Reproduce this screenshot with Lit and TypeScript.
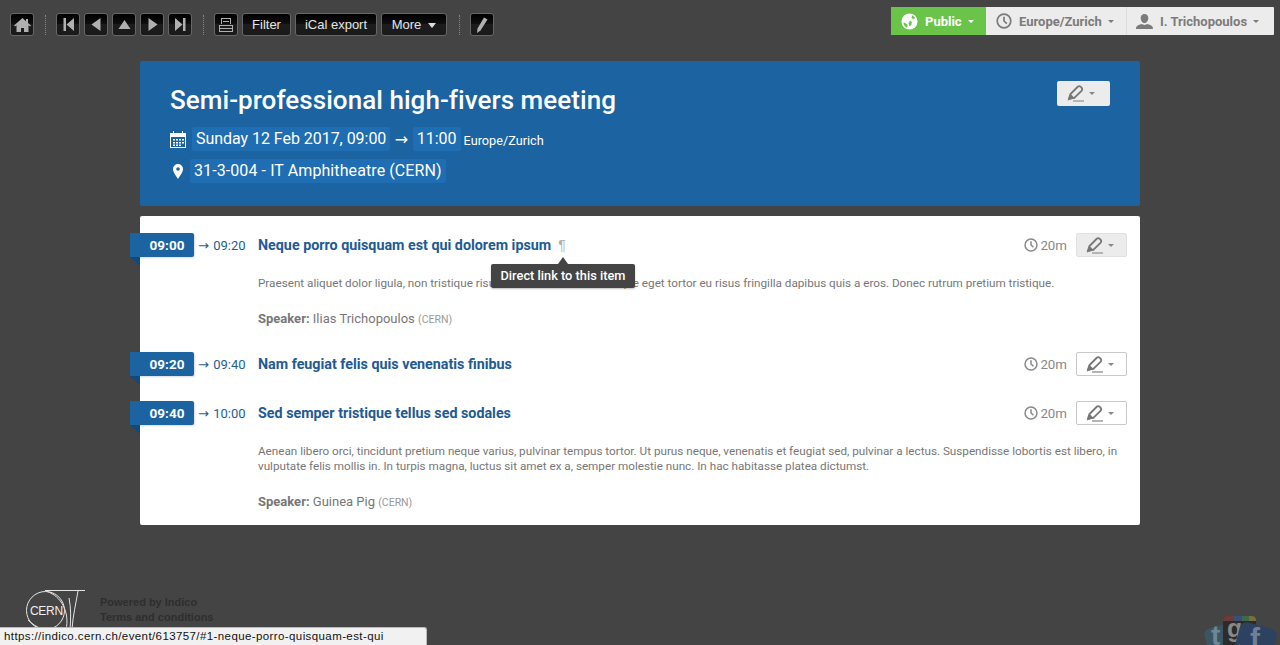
import { LitElement, html, css, svg } from "lit";
import { customElement } from "lit/decorators.js";

const pencil = (c: string) => html`<svg class="pen" width="17" height="17" viewBox="0 0 17 17"><path d="M2 13.500 3.500 9 10.500 2c1-1 2.300-1 3.300-.1l.7.7c.9 1 .9 2.200 0 3.200L7.300 13Z" fill="none" stroke="${c}" stroke-width="1.800"/><path d="M.8 15.500 3.200 8.500l4.600 4.700Z" fill="${c}"/><rect x="6" y="15" width="11" height="2" fill="#b5b5b5"/></svg>`;

const clock = (s: number, c: string) => html`<svg width="${s}" height="${s}" viewBox="0 0 16 16"><circle cx="8" cy="8" r="6.800" fill="none" stroke="${c}" stroke-width="1.700"/><path d="M8 3.800V8l2.800 2.600" fill="none" stroke="${c}" stroke-width="1.700"/></svg>`;

const navIcons = [
  svg`<path d="M3.500 2h2.500v13H3.500zM14 2v13L6.500 8.500z"/>`,
  svg`<path d="M12.500 2v13L3.500 8.500z"/>`,
  svg`<path d="M2.500 13 8.500 4l6 9z"/>`,
  svg`<path d="M4.500 2v13l9-6.500z"/>`,
  svg`<path d="M3 2v13l7.500-6.500zM11 2h2.500v13H11z"/>`,
];

interface Entry {
  start: string;
  end: string;
  title: string;
  desc?: string[];
  speaker?: string;
  affil?: string;
  active?: boolean;
  link?: boolean;
}

const entries: Entry[] = [
  {
    start: "09:00",
    end: "09:20",
    title: "Neque porro quisquam est qui dolorem ipsum",
    desc: ["Praesent aliquet dolor ligula, non tristique risus tincidunt vitae ut. Quisque eget tortor eu risus fringilla dapibus quis a eros. Donec rutrum pretium tristique."],
    speaker: "Ilias Trichopoulos",
    affil: "(CERN)",
    active: true,
    link: true,
  },
  { start: "09:20", end: "09:40", title: "Nam feugiat felis quis venenatis finibus" },
  {
    start: "09:40",
    end: "10:00",
    title: "Sed semper tristique tellus sed sodales",
    desc: [
      "Aenean libero orci, tincidunt pretium neque varius, pulvinar tempus tortor. Ut purus neque, venenatis et feugiat sed, pulvinar a lectus. Suspendisse lobortis est libero, in",
      "vulputate felis mollis in. In turpis magna, luctus sit amet ex a, semper molestie nunc. In hac habitasse platea dictumst.",
    ],
    speaker: "Guinea Pig",
    affil: "(CERN)",
  },
];

@customElement("app-root")
export class AppRoot extends LitElement {
  static styles = css`
    :host {
      display: block;
      position: relative;
      height: 645px;
      overflow: hidden;
      background: #444;
      font-family: Roboto, "Liberation Sans", sans-serif;
      color: #777;
    }
    svg { display: block; flex: none; }
    .topbar {
      height: 49px;
      box-sizing: border-box;
      padding: 7px 6px 0 10px;
      display: flex;
      justify-content: space-between;
      align-items: flex-start;
    }
    .tools { display: flex; align-items: center; margin-top: 6px; height: 23px; }
    .btn {
      box-sizing: border-box;
      height: 23px;
      width: 24px;
      border: 1px solid #666;
      border-radius: 3px;
      background: linear-gradient(#000 0, #0e0e0e 45%, #1c1c1c 50%, #1a1a1a 100%);
      color: #e4e4e4;
      display: flex;
      align-items: center;
      justify-content: center;
      font: 13px "Liberation Sans", Arial, sans-serif;
      margin-right: 4px;
    }
    .btn svg { fill: #b0b0b0; }
    .sep {
      width: 0;
      height: 20px;
      border-left: 1px dotted #888;
      margin: 0 10px 0 7px;
    }
    .sep.last { margin-left: 8px; }
    .filter { width: 49px; }
    .ical { width: 82px; }
    .more { width: 66px; gap: 7px; }
    .more i {
      border: 4px solid transparent;
      border-top: 5px solid #ddd;
      border-bottom: 0;
      margin-top: 2px;
    }
    .session {
      display: flex;
      height: 28px;
      font-weight: 700;
      font-size: 13px;
      background: #ececec;
      border-radius: 1px;
    }
    .session > div {
      display: flex;
      align-items: center;
      box-sizing: border-box;
      color: #7b7b7b;
      gap: 7px;
    }
    .session .pub { width: 95px; background: #69c449; color: #fff; padding-left: 10px; }
    .session .tz { width: 141px; padding-left: 10px; border-right: 1px solid #dcdcdc; }
    .session .usr { width: 147px; padding-left: 9px; }
    .caret {
      border: 3px solid transparent;
      border-top: 3px solid currentColor;
      border-bottom: 0;
      margin-left: -1px;
    }
    main {
      width: 1000px;
      margin: 12px auto 0;
    }
    .head {
      height: 145px;
      box-sizing: border-box;
      background: #1b63a1;
      border-radius: 2px;
      padding: 21px 30px 0;
      color: #fff;
      position: relative;
    }
    h1 {
      margin: 0;
      font-size: 26px;
      font-weight: 500;
      line-height: 36px;
      letter-spacing: 0.05px;
    }
    .line { display: flex; align-items: center; height: 24px; font-size: 16px; margin-top: 8px; }
    .line.first { margin-top: 9px; }
    .hl { background: #1f6db3; border-radius: 2px; padding: 0 4px; line-height: 24px; }
    .hl.date { letter-spacing: -0.04px; }
    .hl.loc { letter-spacing: 0.09px; }
    .arrow { margin: 0 4.500px; font-family: "DejaVu Sans", sans-serif; }
    .small { font-size: 12.700px; margin-left: 3px; position: relative; top: 1px; }
    .head .hbtn {
      position: absolute;
      right: 30px;
      top: 20px;
      width: 53px;
      height: 25px;
      box-sizing: border-box;
      padding-left: 10px;
      background: #ececec;
      border-radius: 2px;
      display: flex;
      align-items: center;
      gap: 6px;
      color: #888;
    }
    .card {
      margin-top: 10px;
      height: 309px;
      box-sizing: border-box;
      background: #fff;
      border-radius: 2px;
      padding-top: 17px;
    }
    .entry { display: grid; grid-template-columns: 118px minmax(0, 1fr); }
    .entry + .entry { margin-top: 25px; }
    .when { display: flex; align-items: center; height: 24px; margin-left: -10px; font-size: 13px; color: #1d5e97; position: relative; }
    .stamp {
      width: 64px;
      height: 24px;
      line-height: 24px;
      text-align: center;
      padding-left: 10px;
      box-sizing: border-box;
      background: #1b63a1;
      color: #fff;
      font-weight: 700;
      font-size: 13.500px;
      border-radius: 0 2px 2px 0;
      box-shadow: 1px 1px 2px rgba(0,0,0,.15);
    }
    .fold {
      position: absolute;
      left: 0;
      top: 24px;
      width: 0;
      height: 0;
      border-top: 9px solid #124a7c;
      border-left: 10px solid transparent;
    }
    .to { margin-left: 4px; white-space: nowrap; word-spacing: 1px; }
    .to i { font: 13px "DejaVu Sans", sans-serif; }
    .body { padding-right: 13px; }
    .titlerow { display: flex; align-items: center; height: 24px; position: relative; }
    .title { font-size: 14.300px; font-weight: 700; color: #225a94; }
    .para { margin-left: 7px; color: #b0b0b0; font: 14px "Liberation Sans", sans-serif; }
    .right { margin-left: auto; display: flex; align-items: center; gap: 9px; }
    .dur { display: flex; align-items: center; gap: 2px; font-size: 13.300px; color: #888; }
    .ebtn {
      width: 51px;
      height: 24px;
      box-sizing: border-box;
      padding-left: 9px;
      border: 1px solid #c9c9c9;
      border-radius: 2px;
      display: flex;
      align-items: center;
      gap: 6px;
      color: #888;
    }
    .ebtn.on { background: #ececec; border-color: #e0e0e0; }
    .desc { margin-top: 19px; font-size: 11.700px; line-height: 15px; color: #777; white-space: nowrap; }
    .speaker { margin-top: 20px; font-size: 13px; line-height: 15px; color: #777; }
    .speaker b { font-weight: 700; }
    .speaker small { font-size: 10.500px; color: #999; }
    .tip {
      position: absolute;
      left: 233px;
      top: 31px;
      width: 144px;
      height: 24px;
      line-height: 24px;
      background: #444;
      color: #fff;
      font-size: 12.800px;
      font-weight: 500;
      text-align: center;
      border-radius: 2px;
      box-shadow: 0 1px 2px rgba(0,0,0,.25);
      white-space: nowrap;
    }
    .tip::before {
      content: "";
      position: absolute;
      left: 67px;
      top: -7px;
      border: 5px solid transparent;
      border-top: 0;
      border-bottom: 7px solid #444;
    }
    .foot {
      position: absolute;
      left: 25px;
      top: 590px;
      display: flex;
      gap: 15px;
    }
    .foot div { padding-top: 5px; font: 700 11px/15px "Liberation Sans", Arial, sans-serif; color: #2e2e2e; }
    .status {
      position: absolute;
      left: 0;
      bottom: 0;
      width: 427px;
      height: 18px;
      box-sizing: border-box;
      background: #f1f1f1;
      border: 1px solid #bbb;
      border-left: 0;
      border-bottom: 0;
      border-radius: 0 3px 0 0;
      font: 11.500px/16px "Liberation Sans", Arial, sans-serif;
      letter-spacing: 0.4px;
      color: #111;
      padding-left: 4px;
    }
    .social { position: absolute; right: 0; bottom: 0; }
  `;

  private entry(e: Entry) {
    return html`
      <div class="entry">
        <div class="when">
          <span class="stamp">${e.start}</span><span class="fold"></span>
          <span class="to"><i>→</i> ${e.end}</span>
        </div>
        <div class="body">
          <div class="titlerow">
            <span class="title">${e.title}</span>
            ${e.link ? html`<span class="para">¶</span><span class="tip">Direct link to this item</span>` : ""}
            <div class="right">
              <span class="dur">${clock(14, "#888")}20m</span>
              <span class="ebtn ${e.active ? "on" : ""}">${pencil("#777")}<span class="caret"></span></span>
            </div>
          </div>
          ${e.desc ? html`<div class="desc">${e.desc.map((d) => html`<div>${d}</div>`)}</div>` : ""}
          ${e.speaker ? html`<div class="speaker"><b>Speaker:</b> ${e.speaker} <small>${e.affil}</small></div>` : ""}
        </div>
      </div>
    `;
  }

  render() {
    return html`
      <div class="topbar">
        <div class="tools">
          <span class="btn"><svg width="17" height="16" viewBox="0 0 17 16"><path d="M8.500 1 0 8.500l1 1 1.500-1.200V15h4.500v-4h3v4H14.500V8.300L16 9.500l1-1L14 6V2h-2v2.200z"/></svg></span>
          <span class="sep"></span>
          ${navIcons.map((p) => html`<span class="btn"><svg width="17" height="17" viewBox="0 0 17 17">${p}</svg></span>`)}
          <span class="sep"></span>
          <span class="btn"><svg width="14" height="14" viewBox="0 0 14 14"><path fill-rule="evenodd" d="M2 0h10v6h-1V1H3v5H2zM0 7h14v7H0zM1 8v2h12V8zM1 11v2h12v-2z"/><rect x="4" y="3" width="6" height="1"/></svg></span>
          <span class="btn filter">Filter</span>
          <span class="btn ical">iCal export</span>
          <span class="btn more">More <i></i></span>
          <span class="sep last"></span>
          <span class="btn"><svg width="12" height="16" viewBox="0 0 12 16"><path d="M8 .5 11.500 2.500 4.500 13.500 1 16l.5-4.500z"/></svg></span>
        </div>
        <div class="session">
          <div class="pub">
            <svg width="17" height="17" viewBox="0 0 18 18"><circle cx="9" cy="9" r="8.500" fill="#fff"/><path d="M2.500 10c1 0 2 .5 3 1.500l1.500 1-.5 3C4.500 15 3 13 2.500 10zM9.500 8l2 1.500-.5 3-2 1.500-1-3zM12 2.500l3 2.500-2 1.500-2-1.500z" fill="#69c449"/></svg>
            Public <span class="caret"></span>
          </div>
          <div class="tz">${clock(16, "#7b7b7b")} Europe/Zurich <span class="caret"></span></div>
          <div class="usr">
            <svg width="17" height="15" viewBox="0 0 17 15"><path d="M8.500 0c2.500 0 3.800 1.800 3.800 4S11 9 8.500 9 4.700 6.200 4.700 4 6 0 8.500 0zM0 15c0-3 2-4 5.500-5l3 1 3-1c3.500 1 5.500 2 5.500 5z" fill="#7b7b7b"/></svg>
            I. Trichopoulos <span class="caret"></span>
          </div>
        </div>
      </div>
      <main>
        <section class="head">
          <h1>Semi-professional high-fivers meeting</h1>
          <div class="line first">
            <svg width="16" height="17" viewBox="0 0 16 17" style="margin-right:6px"><path fill="#fff" fill-rule="evenodd" d="M0 2h3V0h1v2h8V0h1v2h3v15H0zM1 6v10h14V6z"/><path fill="#fff" d="M3 8h2v1.500H3zM6 8h2v1.500H6zM9 8h2v1.500H9zM12 8h2v1.500h-2zM3 11h2v1.500H3zM6 11h2v1.500H6zM9 11h2v1.500H9zM12 11h2v1.500h-2zM3 13.500h2V15H3zM6 13.500h2V15H6zM9 13.500h2V15H9z"/></svg>
            <span class="hl date">Sunday 12 Feb 2017, 09:00</span>
            <span class="arrow">→</span>
            <span class="hl">11:00</span>
            <span class="small">Europe/Zurich</span>
          </div>
          <div class="line">
            <svg width="10" height="15" viewBox="0 0 10 15" style="margin:0 7px 0 3px"><path fill="#fff" fill-rule="evenodd" d="M5 0a5 5 0 0 1 5 5c0 3-3 7-5 10C3 12 0 8 0 5a5 5 0 0 1 5-5zm0 3.200a1.800 1.800 0 1 0 0 3.600 1.800 1.800 0 0 0 0-3.600z"/></svg>
            <span class="hl loc">31-3-004 - IT Amphitheatre (CERN)</span>
          </div>
          <span class="hbtn">${pencil("#777")}<span class="caret"></span></span>
        </section>
        <section class="card">${entries.map((e) => this.entry(e))}</section>
      </main>
      <footer class="foot">
        <svg width="60" height="50" viewBox="0 0 60 50" fill="none" stroke="#e4e4e4" stroke-width="1">
          <path d="M60 .5H20"/>
          <circle cx="20.500" cy="20.500" r="19"/>
          <path d="M22 1.500C36 6 45 22 41 40M53 1c-2 12-5 24-6 38M44 8c2 10 2 20 1 31M3 30c4 4 9 7 14 9"/>
          <text x="5" y="25" font-family="Liberation Sans, sans-serif" font-size="12" letter-spacing="-0.3" fill="#eee" stroke="none">CERN</text>
        </svg>
        <div>Powered by Indico<br />Terms and conditions</div>
      </footer>
      <div class="status">https://indico.cern.ch/event/613757/#1-neque-porro-quisquam-est-qui</div>
      <svg class="social" width="80" height="32" viewBox="0 0 80 32">
        <rect x="7" y="12" width="36" height="36" rx="6" fill="#3c5563" transform="rotate(-15 25 30)"/>
        <text x="11" y="32" font-family="Liberation Sans" font-size="28" font-weight="700" fill="#6d8796">t</text>
        <rect x="23" y="3" width="33" height="40" rx="4" fill="#2b2b2b"/>
        <path d="M27 3h7v5H23V7a4 4 0 0 1 4-4z" fill="#6d3a3a"/>
        <rect x="34" y="3" width="8" height="5" fill="#3a4f78"/>
        <rect x="42" y="3" width="7" height="5" fill="#3f6a4a"/>
        <path d="M49 3h3a4 4 0 0 1 4 4v1H49z" fill="#7a6f3a"/>
        <text x="27" y="24" font-family="Liberation Sans" font-size="25" font-weight="700" fill="#888">g</text>
        <rect x="36" y="12" width="38" height="38" rx="7" fill="#2d4160" transform="rotate(15 55 31)"/>
        <text x="50" y="36" font-family="Liberation Sans" font-size="30" font-weight="700" fill="#6e7f97">f</text>
      </svg>
    `;
  }
}
